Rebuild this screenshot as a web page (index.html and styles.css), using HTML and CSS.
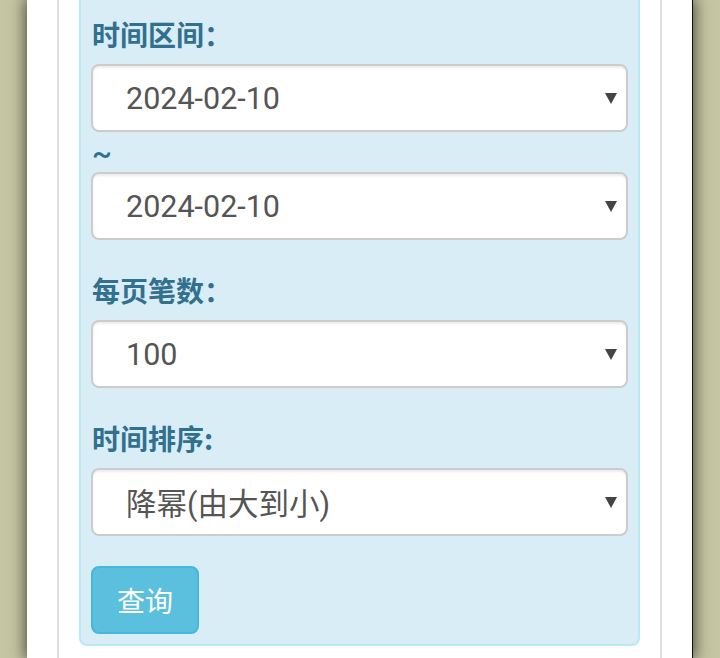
FILE: index.html
```html
<!DOCTYPE html>
<html lang="zh-CN">
<head>
<meta charset="utf-8">
<title>查询</title>
<link rel="stylesheet" href="styles.css">
</head>
<body>
<div class="page">
  <div class="inner">
    <div class="panel">
      <div class="form-group">
        <div class="label">时间区间：</div>
        <div class="select"><span class="value">2024-02-10</span><svg class="arrow" width="12" height="11" viewBox="0 0 12 11"><polygon points="0,0 12,0 6,11" fill="#444"/></svg></div>
        <div class="tilde">~</div>
        <div class="select"><span class="value">2024-02-10</span><svg class="arrow" width="12" height="11" viewBox="0 0 12 11"><polygon points="0,0 12,0 6,11" fill="#444"/></svg></div>
      </div>
      <div class="form-group">
        <div class="label">每页笔数：</div>
        <div class="select"><span class="value">100</span><svg class="arrow" width="12" height="11" viewBox="0 0 12 11"><polygon points="0,0 12,0 6,11" fill="#444"/></svg></div>
      </div>
      <div class="form-group">
        <div class="label">时间排序:</div>
        <div class="select"><span class="value">降幂(由大到小)</span><svg class="arrow" width="12" height="11" viewBox="0 0 12 11"><polygon points="0,0 12,0 6,11" fill="#444"/></svg></div>
      </div>
      <button class="btn">查询</button>
    </div>
  </div>
</div>
</body>
</html>
```
FILE: styles.css
```css
html, body {
  margin: 0;
  padding: 0;
  height: 100%;
  overflow: hidden;
}
body {
  background: #c5c4a3;
  font-family: Roboto, "Noto Sans CJK SC", sans-serif;
}
.page {
  margin: 0 27px;
  min-height: 100vh;
  background: #fff;
  border-right: 1px solid #111;
  box-shadow: 0 0 14px 2px rgba(40, 40, 20, 0.75);
  padding: 0 30px;
  box-sizing: border-box;
}
.inner {
  min-height: 100vh;
  border-left: 2px solid #dedede;
  border-right: 2px solid #dedede;
  padding: 0 20px;
  box-sizing: border-box;
}
.panel {
  background: #d9edf7;
  border: 2px solid #bce8f1;
  border-top: none;
  border-radius: 0 0 8px 8px;
  padding: 14px 10px 10px;
}
.form-group {
  margin-bottom: 30px;
}
.label {
  font-family: "Noto Sans CJK SC", sans-serif;
  font-weight: bold;
  font-size: 28px;
  line-height: 40px;
  color: #31708f;
  margin-bottom: 10px;
  padding-left: 1px;
}
.tilde {
  font-family: Roboto, "Noto Sans CJK SC", sans-serif;
  font-weight: 500;
  font-size: 30px;
  line-height: 40px;
  color: #31708f;
  padding-left: 1px;
  padding-top: 2px;
  height: 40px;
  box-sizing: border-box;
}
.select {
  display: flex;
  align-items: center;
  height: 68px;
  box-sizing: border-box;
  background: #fff;
  border: 2px solid #cccccc;
  border-radius: 8px;
  box-shadow: inset 0 2px 2px rgba(0, 0, 0, 0.075);
  padding: 0 9px 0 33px;
}
.value {
  font-size: 30.5px;
  color: #555;
  flex: 1;
}
.arrow {
  display: block;
  flex: none;
}
.btn {
  display: block;
  height: 68px;
  padding: 0 24px;
  font-family: "Noto Sans CJK SC", sans-serif;
  font-size: 28px;
  color: #fff;
  background: #5bc0de;
  border: 2px solid #46b8da;
  border-radius: 8px;
}
```
